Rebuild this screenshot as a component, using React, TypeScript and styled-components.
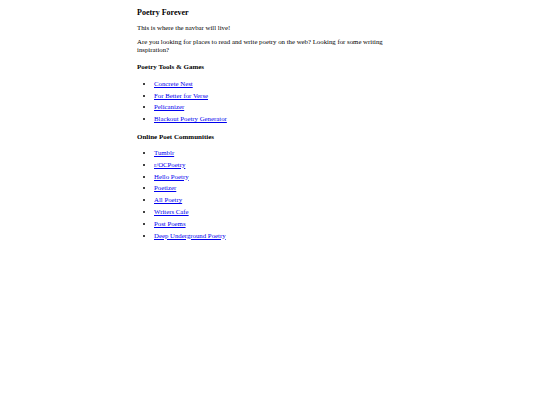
import { createGlobalStyle } from "styled-components";
import styled from "styled-components";

const GlobalStyle = createGlobalStyle`
  html, body {
    margin: 0;
    padding: 0;
    background: #ffffff;
  }
  body {
    font-family: "Liberation Serif", "Times New Roman", serif;
    color: #000000;
  }
`;

const Page = styled.main`
  width: 266px;
  margin: 0 auto;
  padding-top: 8px;
  font-size: 6.8px;
  line-height: 7.4px;
`;

const Title = styled.h1`
  margin: 0 0 7px;
  font-size: 8px;
  line-height: 9px;
  font-weight: 700;
`;

const Paragraph = styled.p`
  margin: 0 0 7px;
`;

const SectionTitle = styled.h3`
  margin: 10px 0 8.5px;
  font-size: 7px;
  line-height: 8px;
  font-weight: 700;
`;

const LinkList = styled.ul`
  margin: 0;
  padding-left: 17px;
  list-style: disc;
`;

const Item = styled.li`
  margin-bottom: 4.4px;
`;

const Link = styled.a`
  color: #0000ee;
  text-decoration: underline;
`;

const tools = [
  "Concrete Nest",
  "For Better for Verse",
  "Pelicanizer",
  "Blackout Poetry Generator",
];

const communities = [
  "Tumblr",
  "r/OCPoetry",
  "Hello Poetry",
  "Poetizer",
  "All Poetry",
  "Writers Cafe",
  "Post Poems",
  "Deep Underground Poetry",
];

const App = () => {
  return (
    <>
      <GlobalStyle />
      <Page>
        <Title>Poetry Forever</Title>
        <Paragraph>This is where the navbar will live!</Paragraph>
        <Paragraph>
          Are you looking for places to read and write poetry on the web?
          Looking for some writing inspiration?
        </Paragraph>
        <SectionTitle>Poetry Tools &amp; Games</SectionTitle>
        <LinkList>
          {tools.map((name) => (
            <Item key={name}>
              <Link href="#">{name}</Link>
            </Item>
          ))}
        </LinkList>
        <SectionTitle>Online Poet Communities</SectionTitle>
        <LinkList>
          {communities.map((name) => (
            <Item key={name}>
              <Link href="#">{name}</Link>
            </Item>
          ))}
        </LinkList>
      </Page>
    </>
  );
};

export default App;
